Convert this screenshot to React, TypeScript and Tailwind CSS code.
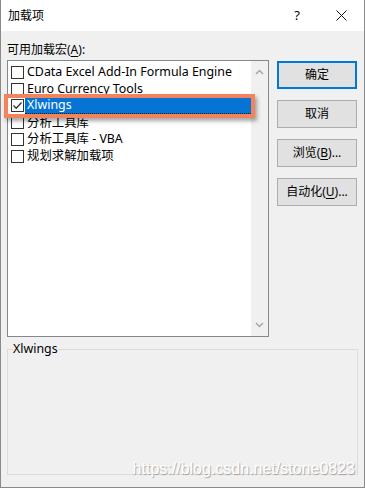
import React from "react";

const items = [
  "CData Excel Add-In Formula Engine",
  "Euro Currency Tools",
  "Xlwings",
  "分析工具库",
  "分析工具库 - VBA",
  "规划求解加载项",
];

function Box({ checked }: { checked?: boolean }) {
  return (
    <div className="w-[13px] h-[13px] border border-[#333333] bg-white flex items-center justify-center shrink-0">
      {checked && (
        <svg width="11" height="11" viewBox="0 0 11 11">
          <path d="M1.5 5.5 L4.2 8.2 L9.5 2.5" fill="none" stroke="#333" strokeWidth="1.3" />
        </svg>
      )}
    </div>
  );
}

function Btn({ children, primary }: { children: React.ReactNode; primary?: boolean }) {
  return (
    <div
      className={
        "w-[80px] h-[28px] flex items-center justify-center text-[12px] text-black bg-[#e1e1e1] " +
        (primary ? "border-2 border-[#0078d7]" : "border border-[#adadad]")
      }
    >
      {children}
    </div>
  );
}

export default function App() {
  return (
    <div
      className="relative w-[365px] h-[488px] bg-[#f0f0f0] border-x border-b border-[#8a8a8a] flex flex-col text-black overflow-hidden"
      style={{ fontFamily: '"Noto Sans", "Noto Sans CJK SC", sans-serif' }}
    >
      <div className="h-[31px] bg-white flex items-center shrink-0">
        <span className="ml-[7px] text-[12px] leading-none">加载项</span>
        <span className="ml-auto mr-[36px] text-[13px] leading-none">?</span>
        <svg className="mr-[17px]" width="11" height="11" viewBox="0 0 11 11">
          <path d="M0.5 0.5 L10.5 10.5 M10.5 0.5 L0.5 10.5" stroke="#111" strokeWidth="1" />
        </svg>
      </div>
      <div className="pl-[6px] pr-[6px] flex flex-col">
        <div className="mt-[11px] h-[16px] leading-[16px] text-[12px]">
          可用加载宏(<span className="underline underline-offset-2">A</span>):
        </div>
        <div className="flex mt-[2px]">
          <div className="w-[262px] h-[277px] border border-[#828790] bg-white flex">
            <div className="flex-1 pt-[3px] flex flex-col">
              {items.map((t, i) => (
                <div key={t} className="h-[16.8px] flex items-center pl-[3px]">
                  <Box checked={i === 2} />
                  <div
                    className={
                      "ml-[1px] h-full flex-1 flex items-center pl-[2px] text-[12.4px] leading-none " +
                      (i === 2 ? "bg-[#0674d4] text-white border-b border-dotted border-[#222]" : "")
                    }
                  >
                    {t}
                  </div>
                </div>
              ))}
            </div>
            <div className="w-[17px] bg-[#f0f0f0] flex flex-col items-center justify-between py-[8px]">
              <svg width="9" height="6" viewBox="0 0 9 6">
                <path d="M1 5 L4.5 1.5 L8 5" fill="none" stroke="#a6a6a6" strokeWidth="1.5" />
              </svg>
              <svg width="9" height="6" viewBox="0 0 9 6">
                <path d="M1 1 L4.5 4.5 L8 1" fill="none" stroke="#a6a6a6" strokeWidth="1.5" />
              </svg>
            </div>
          </div>
          <div className="ml-[8px] flex flex-col gap-[11px] pt-[1px]">
            <Btn primary>确定</Btn>
            <Btn>取消</Btn>
            <Btn>
              浏览(<span className="underline underline-offset-2">B</span>)...
            </Btn>
            <Btn>
              自动化(<span className="underline underline-offset-2">U</span>)...
            </Btn>
          </div>
        </div>
        <fieldset className="mt-[4px] h-[134px] border border-[#dcdcdc] pl-[5px] w-[351px]">
          <legend className="text-[12.4px] leading-[16px] px-0">Xlwings</legend>
        </fieldset>
      </div>
      <div className="absolute left-[3px] top-[94px] w-[251px] h-[24px] border-4 border-[#f1835d] shadow-[2px_3px_4px_rgba(0,0,0,0.35)]" />
      <div
        className="absolute right-[9px] bottom-[10px] text-[16px] leading-none text-white [text-shadow:1px_1px_1px_rgba(0,0,0,0.3)]"
        style={{ fontFamily: '"Liberation Sans", Arial, sans-serif' }}
      >
        https://blog.csdn.net/stone0823
      </div>
    </div>
  );
}
